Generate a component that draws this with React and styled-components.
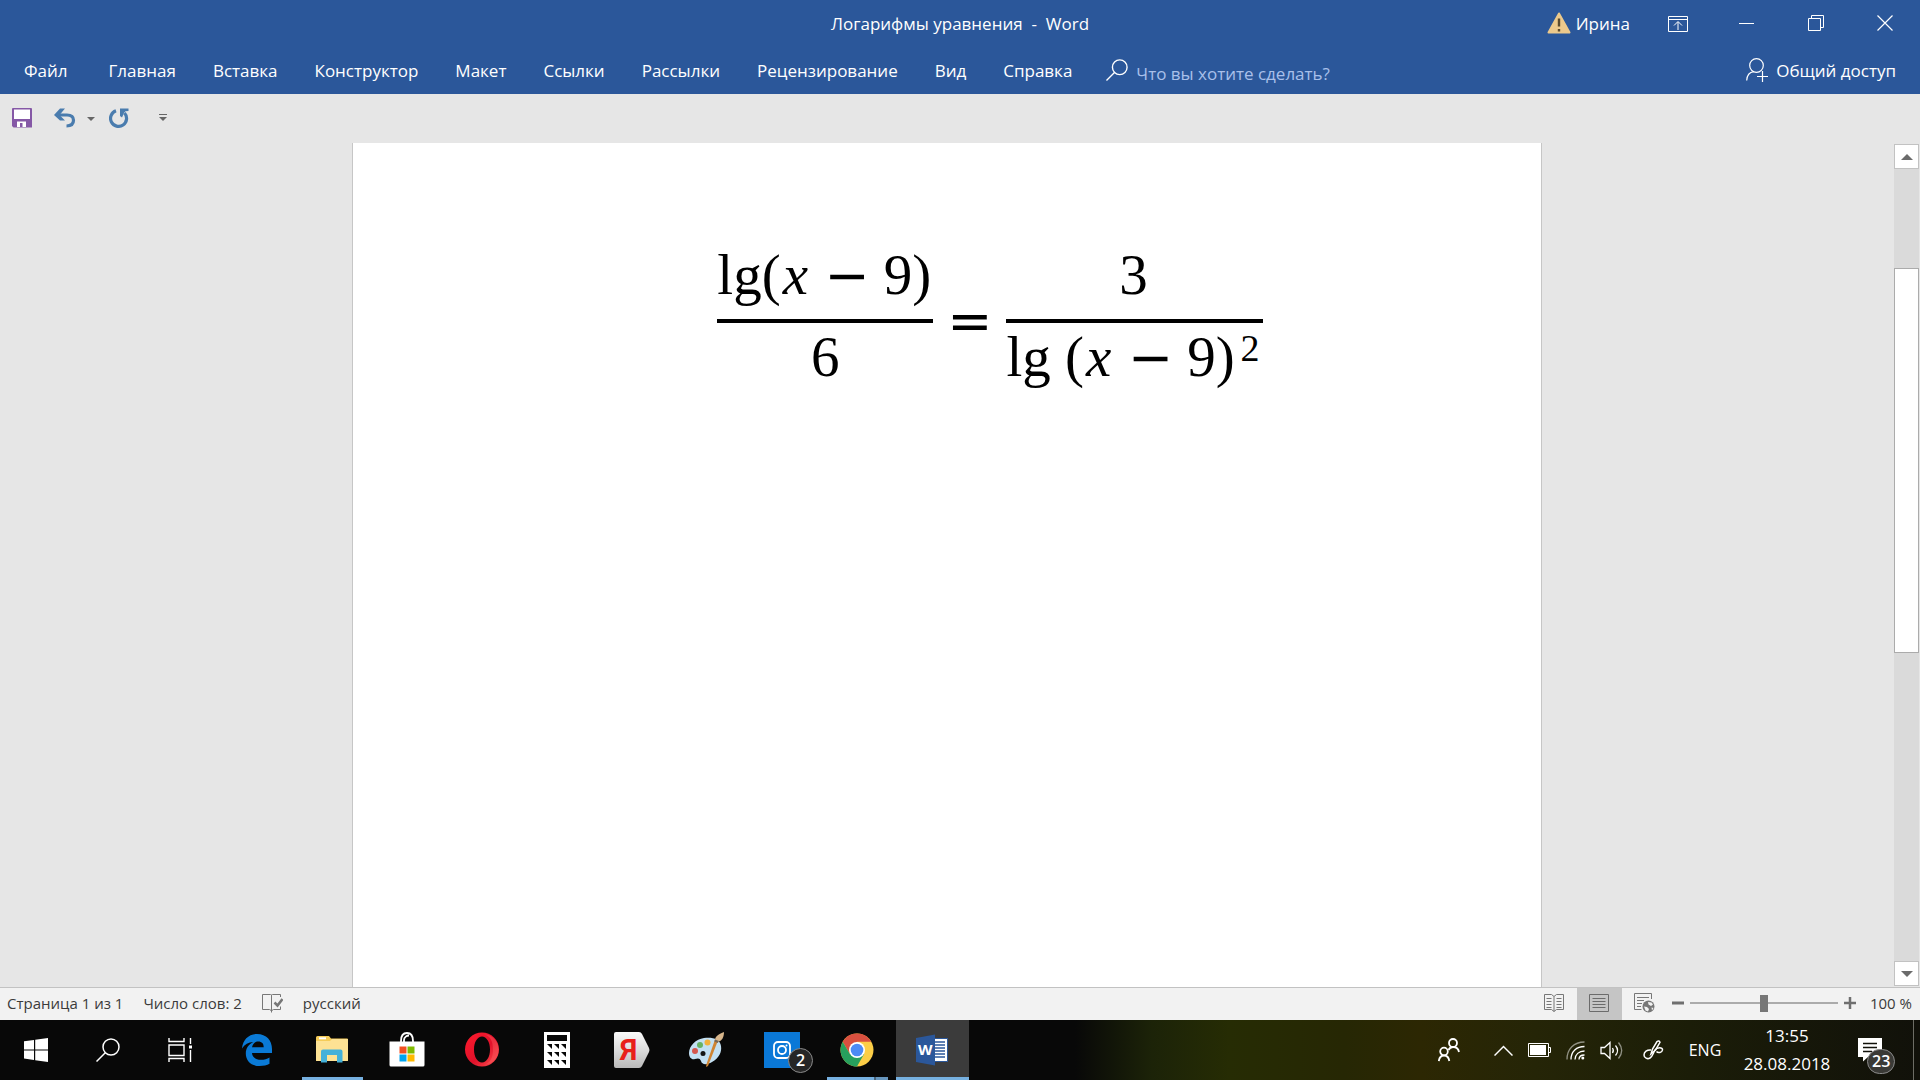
import React, { useState } from "react";
import styled, { createGlobalStyle, css } from "styled-components";

const GlobalStyle = createGlobalStyle`
  * {
    box-sizing: border-box;
  }

  body {
    margin: 0;
    font-family: "Open Sans", "Noto Sans", sans-serif;
    overflow: hidden;
  }

  button {
    border: 0;
    padding: 0;
    margin: 0;
    background: none;
    color: inherit;
    font: inherit;
  }

  svg {
    display: block;
    flex: none;
  }
`;

const Window = styled.div`
  height: 100vh;
  display: flex;
  flex-direction: column;
  background: #e6e6e6;
`;

/* ---------- title and ribbon ---------- */

const Header = styled.header`
  background: #2b579a;
  color: #fff;
  height: 94px;
  flex: none;
`;

const TitleBar = styled.div`
  height: 46px;
  display: grid;
  grid-template-columns: 1fr auto 1fr;
  align-items: center;
`;

const Title = styled.h1`
  grid-column: 2;
  margin: 0;
  font-size: 17px;
  font-weight: 400;
  white-space: pre;
`;

const WindowControls = styled.div`
  display: flex;
  align-items: center;
  justify-content: flex-end;
  height: 46px;
  padding-right: 1px;
`;

const Account = styled.button`
  display: flex;
  align-items: center;
  gap: 5px;
  font-size: 17px;
  margin-right: 13px;
`;

const ControlButton = styled.button`
  width: 69px;
  height: 46px;
  display: flex;
  align-items: center;
  justify-content: center;
`;

const Ribbon = styled.nav`
  height: 48px;
  display: flex;
  align-items: center;
  gap: 1px;
  padding: 0 24px 0 6px;
`;

const Tab = styled.button`
  height: 48px;
  padding: 0 18px;
  font-size: 17px;
  white-space: nowrap;
`;

const FileTab = styled(Tab)`
  margin-right: 4px;
`;

const TellMe = styled.label`
  display: flex;
  align-items: center;
  gap: 8px;
  margin-left: 15px;

  input {
    width: 240px;
    padding: 6px 0 0;
    border: 0;
    outline: 0;
    background: none;
    color: #fff;
    font: 17px "Open Sans", "Noto Sans", sans-serif;
  }

  input::placeholder {
    color: #a9c0ea;
    opacity: 1;
  }
`;

const Share = styled.button`
  margin-left: auto;
  display: flex;
  align-items: center;
  gap: 7px;
  font-size: 17px;
`;

const QuickAccess = styled.div`
  height: 49px;
  flex: none;
  display: flex;
  align-items: center;
  padding: 0 0 2px 12px;
`;

const QuickButton = styled.button`
  width: ${props => props.$width}px;
  height: 32px;
  margin-right: ${props => props.$after || 0}px;
  display: flex;
  align-items: center;
  justify-content: center;
`;

/* ---------- document ---------- */

const Workspace = styled.main`
  flex: 1;
  min-height: 0;
  display: flex;
`;

const Canvas = styled.div`
  flex: 1;
  display: flex;
  justify-content: center;
`;

const Page = styled.article`
  width: 62.8%;
  background: #fff;
  border: solid #c6c6c6;
  border-width: 0 1px;
  display: flex;
  justify-content: center;
  align-items: flex-start;
  padding: 98px 0 0 86px;
`;

const Equation = styled.div`
  display: flex;
  align-items: center;
  gap: 14px;
  color: #000;
  font-family: "Liberation Serif", serif;
  font-size: 57px;
  line-height: 68px;
  white-space: pre;

  i {
    font-style: italic;
    margin: 0 2px;
  }
`;

const Operator = styled.span`
  font-family: "DejaVu Sans", sans-serif;
  font-size: 54px;
  line-height: 0;
`;

const Fraction = styled.div`
  display: flex;
  flex-direction: column;
  text-align: center;
`;

const Numerator = styled.div`
  border-bottom: 4px solid #000;
  height: 82px;
  padding: 0 2px 0 0;
`;

const Denominator = styled.div`
  height: 78px;

  sup {
    margin: 0 3px 0 6px;
    font-size: 38px;
    line-height: 0;
    vertical-align: 15px;
  }
`;

const ScrollBar = styled.div`
  width: 25px;
  margin: 1px 1px 1px 0;
  display: flex;
  flex-direction: column;
  background: #dadada;
`;

const ScrollButton = styled.button`
  height: 25px;
  flex: none;
  background: #fff;
  border: 1px solid #c2c2c2;
  display: flex;
  align-items: center;
  justify-content: center;
`;

const ScrollTrack = styled.div`
  flex: 1;
  padding-top: 99px;
`;

const ScrollThumb = styled.div`
  height: 55.5%;
  background: #fff;
  border: 1px solid #ababab;
`;

/* ---------- status bar ---------- */

const StatusBar = styled.footer`
  height: 33px;
  flex: none;
  display: flex;
  align-items: center;
  padding: 0 8px 0 7px;
  background: #f2f2f2;
  border-top: 1px solid #c2c2c2;
  color: #3b3b3b;
  font-size: 15px;
`;

const StatusItem = styled.button`
  margin-right: 20px;
  padding-bottom: 2px;
  white-space: nowrap;
`;

const Views = styled.div`
  margin-left: auto;
  display: flex;
  height: 32px;
`;

const ViewButton = styled.button`
  width: 45px;
  padding-bottom: 2px;
  display: flex;
  align-items: center;
  justify-content: center;
  background: ${props => (props.$active ? "#c5c5c5" : "none")};
`;

const Zoom = styled.div`
  display: flex;
  align-items: center;
  gap: 6px;
  margin-left: 5px;
  padding-bottom: 2px;

  input {
    appearance: none;
    width: 148px;
    height: 18px;
    margin: 0;
    background: linear-gradient(#ababab, #ababab) center / 100% 2px no-repeat;
  }

  input::-webkit-slider-thumb {
    appearance: none;
    width: 8px;
    height: 17px;
    background: #777;
  }
`;

const ZoomValue = styled.button`
  margin-left: 8px;
  white-space: nowrap;
`;

/* ---------- taskbar ---------- */

const Taskbar = styled.div`
  height: 60px;
  flex: none;
  display: flex;
  color: #fff;
  background: linear-gradient(
    90deg,
    #080808 0 56%,
    #1c2308 60%,
    #262c04 64%,
    #262704 70%,
    #2c2703 74%,
    #252507 80%,
    #1b1d08 88%,
    #11110a 100%
  );
`;

const SystemButton = styled.button`
  width: 72px;
  height: 60px;
  display: flex;
  align-items: center;
  justify-content: center;
`;

const Apps = styled.div`
  display: flex;
  gap: 2px;
  margin-left: 5px;
`;

const AppButton = styled.button`
  position: relative;
  width: 73px;
  height: 60px;
  padding-right: 2px;
  display: flex;
  align-items: center;
  justify-content: center;

  ${props => props.$running && css`
    &::after {
      content: "";
      position: absolute;
      bottom: 0;
      left: ${props.$active ? 0 : 6}px;
      right: ${props.$active ? 0 : 6}px;
      height: 3px;
      background: ${props.$stacked ? "linear-gradient(90deg, #76b0e0 0 47px, #4a657c 47px 49px, #6796bd 49px)" : "#76b0e0"};
    }
  `}

  ${props => props.$active && css`
    background: #3b3b3b;
  `}
`;

const Badge = styled.span`
  position: absolute;
  left: ${props => props.$left}px;
  top: ${props => props.$top}px;
  min-width: 25px;
  height: 25px;
  padding: 0 4px;
  border: 1px solid #8a8a8a;
  border-radius: 13px;
  background: ${props => props.$fill};
  font-size: 16px;
  font-weight: 600;
  line-height: 23px;
  text-align: center;
`;

const Tray = styled.div`
  margin-left: auto;
  display: flex;
  align-items: center;
`;

const TrayButton = styled.button`
  position: relative;
  width: ${props => props.$width}px;
  height: 60px;
  display: flex;
  align-items: center;
  justify-content: center;
  font-size: 16px;
  white-space: nowrap;
`;

const NotificationsButton = styled(TrayButton)`
  padding-right: 14px;
`;

const Clock = styled.button`
  width: 108px;
  font-size: 17px;
  line-height: 28px;
  text-align: center;
`;

const ShowDesktop = styled.button`
  width: 7px;
  height: 60px;
  border-left: 1px solid #6d6d65;
`;

/* ---------- icons ---------- */

const SearchIcon = ({ size = 24, stroke = 1.5 }) => (
  <svg width={size} height={size} viewBox="0 0 24 24" fill="none" stroke="#fff" strokeWidth={stroke}>
    <circle cx="15" cy="9" r="8" />
    <path d="M9.5 14.5 0.5 23.5" />
  </svg>
);

const WarningIcon = () => (
  <svg width="24" height="22" viewBox="0 0 24 22">
    <path d="M12 1.5 22.5 20.5H1.5Z" fill="#ecc98c" stroke="#ecc98c" strokeWidth="2" strokeLinejoin="round" />
    <path d="M12 6.5v8M12 17v2.4" stroke="#5b4b2e" strokeWidth="2.4" />
  </svg>
);

const RibbonOptionsIcon = () => (
  <svg width="20" height="17" viewBox="0 0 20 17" fill="none" stroke="#fff">
    <path d="M.5 1.5h19v15H.5zM.5 4.5h19M10 15V7M6 10.5 10 6.5l4 4" />
  </svg>
);

const MinimizeIcon = () => (
  <svg width="15" height="16" viewBox="0 0 15 16" stroke="#fff">
    <path d="M0 8.5h15" />
  </svg>
);

const RestoreIcon = () => (
  <svg width="16" height="16" viewBox="0 0 16 16" fill="none" stroke="#fff">
    <path d="M.5 3.5h12v12H.5zM3.5 3.5v-3h12v12h-3" />
  </svg>
);

const CloseIcon = () => (
  <svg width="16" height="16" viewBox="0 0 16 16" stroke="#fff" strokeWidth="1.2">
    <path d="M.5.5l15 15M15.5.5l-15 15" />
  </svg>
);

const ShareIcon = () => (
  <svg width="23" height="24" viewBox="0 0 23 24" fill="none" stroke="#fff" strokeWidth="1.2">
    <circle cx="10.5" cy="7.5" r="6.8" />
    <path d="M.7 22.5c.3-5 3-8.3 7-8.8M11 18.500h11M16.5 13v11" />
  </svg>
);

const SaveIcon = () => (
  <svg width="20" height="20" viewBox="0 0 20 20">
    <path d="M1 0h18a1 1 0 0 1 1 1v18.500H1.500L0 18V1a1 1 0 0 1 1-1z" fill="#8558a6" />
    <path d="M2 1.500h16V11H2z" fill="#fff" />
    <path d="M5 13.500h9V19H5z" fill="#fff" />
    <path d="M8 15h2.500v4H8z" fill="#8558a6" />
  </svg>
);

const UndoIcon = () => (
  <svg width="22" height="20" viewBox="0 0 22 20">
    <path d="M4 7h9c4.500 0 6.500 2.300 6.500 5.300S17.500 18 12.500 18" fill="none" stroke="#4a7cae" strokeWidth="3.2" />
    <path d="M6 .5h5L5.500 7l5.500 5.500H6L0 7z" fill="#4a7cae" />
  </svg>
);

const RedoIcon = () => (
  <svg width="20" height="20" viewBox="0 0 20 20">
    <path d="M7 2.800A8 8 0 1 0 15.500 5" fill="none" stroke="#4a7cae" strokeWidth="3.2" />
    <path d="M11 .5h8.500V3l-3 .3-1.500 1.700-2 4.500L11 8z" fill="#4a7cae" />
  </svg>
);

const CaretIcon = ({ bar }) => (
  <svg width="8" height="9" viewBox="0 0 8 9" fill="#666">
    {bar && <path d="M0 1h8v1H0z" />}
    <path d="M0 4h8L4 8z" />
  </svg>
);

const TriangleIcon = ({ down }) => (
  <svg width="12" height="6" viewBox="0 0 12 6" fill="#6b6b6b">
    <path d={down ? "M0 0h12L6 6z" : "M0 6h12L6 0z"} />
  </svg>
);

const ProofIcon = () => (
  <svg width="21" height="19" viewBox="0 0 21 19" fill="none" stroke="#777">
    <path d="M9.500 3V1.500q0-1-1-1h-8v15h7q1.500 0 2 2 .5-2 2-2h7v-3M9.500 3V1.500q0-1 1-1h8v2.500M9.500 3v15.500" />
    <path d="m12.500 8.500 3 3 5-6.500" strokeWidth="2.5" />
  </svg>
);

const ReadIcon = () => (
  <svg width="20" height="18" viewBox="0 0 20 18" fill="none" stroke="#777">
    <path d="M.5.500h7l2.500 2 2.500-2h7v15h-7l-2.500 2-2.500-2h-7zM10 2.500v15" />
    <path d="M2.500 4.500h5M2.500 7.500h5M2.500 10.500h5M2.500 13.500h5M12.500 4.500h5M12.500 7.500h5M12.500 10.500h5M12.500 13.500h5" />
  </svg>
);

const PrintIcon = () => (
  <svg width="20" height="18" viewBox="0 0 20 18" fill="none" stroke="#6b6b6b">
    <path d="M.5.500h19v17H.5zM3.500 4.500h13M3.500 7.500h13M3.500 10.500h13M3.500 13.500h13" />
  </svg>
);

const WebIcon = () => (
  <svg width="21" height="20" viewBox="0 0 21 20" fill="none" stroke="#777">
    <path d="M7.500 16.500h-7V.5h17v5.500M3 4.500h12M3 7.500h7M3 10.500h5M3 13.500h4" />
    <circle cx="14.5" cy="13.5" r="6" fill="#777" stroke="none" />
    <path d="M14 9l3.500.5 1.500 2-2 1.500-2.500-1.500zM10 13.500l3 .5 2 2-1 2.500-2.500-1zM17.500 14.500l2 .5-1.500 2.500z" fill="#f2f2f2" stroke="none" />
  </svg>
);

const MinusIcon = () => (
  <svg width="12" height="12" viewBox="0 0 12 12" stroke="#6f6f6f" strokeWidth="3">
    <path d="M0 6h12" />
  </svg>
);

const PlusIcon = () => (
  <svg width="12" height="12" viewBox="0 0 12 12" stroke="#6f6f6f" strokeWidth="2.5">
    <path d="M0 6h12M6 0v12" />
  </svg>
);

const WindowsIcon = () => (
  <svg width="24" height="24" viewBox="0 0 24 24" fill="#fff">
    <path d="M0 3.300 10 2v9.400H0zM11.200 1.800 24 0v11.400H11.200zM0 12.600h10V22L0 20.600zM11.200 12.600H24V24l-12.800-1.800z" />
  </svg>
);

const TaskViewIcon = () => (
  <svg width="25" height="24" viewBox="0 0 25 24" fill="none" stroke="#fff" strokeWidth="1.4">
    <path d="M1 0v3.500h15V0M1 7h15v10.500H1zM1 24v-3.500h15V24M22.500 0v6M22.500 12v12" />
    <path d="M21 7.500h3v3h-3z" fill="#fff" stroke="none" />
  </svg>
);

const EdgeIcon = () => (
  <svg width="30" height="32" viewBox="0 0 30 32">
    <path
      d="M0 14.500C.8 6 6.500 0 15 0c9.500 0 15 6.500 15 15v4H10c.3 4.500 4 6.800 9 6.800 3.300 0 6-.8 8.500-2.300v6.300C25 31.300 21.500 32 17.500 32 9 32 3.800 26.800 3.800 19.500c0-5.500 3-9.300 7.500-11.500C6.500 8.300 2.500 10.500 0 14.500zM10 13.200h11.700c0-3.500-1.700-5.700-5.500-5.700-3.300 0-5.400 2.200-6.200 5.700z"
      fill="#0a7ad6"
    />
  </svg>
);

const ExplorerIcon = () => (
  <svg width="32" height="28" viewBox="0 0 32 28">
    <path d="M0 1.500A1.500 1.500 0 0 1 1.500 0H13l2 2.500h16a1 1 0 0 1 1 1V25H0z" fill="#f5cc58" />
    <path d="M3 1.300h7v2H3z" fill="#fff" />
    <path d="M0 5h14l2-2h16v21a1 1 0 0 1-1 1H1a1 1 0 0 1-1-1z" fill="#fde294" />
    <path d="M5 15.500A2 2 0 0 1 7 13.500h17.500a2 2 0 0 1 2 2V26.500h-5.500v-7.500H11v7.500H5z" fill="#44b1d9" />
  </svg>
);

const StoreIcon = () => (
  <svg width="36" height="36" viewBox="0 0 36 36">
    <path d="M12 11V9c0-5 2-8 6-8s6 3 6 8v2M15 10V8c0-3 3-4.500 5-4.500" fill="none" stroke="#fff" strokeWidth="1.8" />
    <path d="M.5 9.500h35V33a1.500 1.500 0 0 1-1.500 1.500H2A1.500 1.500 0 0 1 .5 33z" fill="#fff" />
    <path d="M10.500 14.500h7v7h-7z" fill="#f25022" />
    <path d="M18.500 14.500h7v7h-7z" fill="#7fba00" />
    <path d="M10.500 22.500h7v7h-7z" fill="#00a4ef" />
    <path d="M18.500 22.500h7v7h-7z" fill="#ffb900" />
  </svg>
);

const OperaIcon = () => (
  <svg width="36" height="36" viewBox="0 0 36 36">
    <defs>
      <linearGradient id="opera" x1="0" y1="0" x2="1" y2="1">
        <stop offset="0" stopColor="#ff1b2d" />
        <stop offset=".55" stopColor="#e0112a" />
        <stop offset="1" stopColor="#ff5252" />
      </linearGradient>
    </defs>
    <path fillRule="evenodd" fill="url(#opera)" d="M18 .5a17 17 0 1 0 0 34 17 17 0 1 0 0-34zM18 4.500c4.500 0 8 5.500 8 13s-3.500 13-8 13-8-5.500-8-13 3.500-13 8-13z" />
    <path d="M19 2.500c7 0 10 7 10 15s-3 15-10 15c9 1 15.500-6.500 15.500-15S28 1.500 19 2.500z" fill="#ff6a6a" opacity=".35" />
  </svg>
);

const CalcIcon = () => (
  <svg width="26" height="36" viewBox="0 0 26 36">
    <path d="M0 0h26v36H0z" fill="#fff" />
    <path d="M3 3h20v6H3z" fill="#080808" />
    {[12, 20, 28].map(y =>
      [3, 10, 17].map(x => <path key={`${x}-${y}`} d={`M${x} ${y}h5v5z`} fill="#080808" />)
    )}
  </svg>
);

const YandexIcon = () => (
  <svg width="36" height="36" viewBox="0 0 36 36">
    <defs>
      <linearGradient id="yandex" x1="0" y1="0" x2="0" y2="1">
        <stop offset="0" stopColor="#fafafa" />
        <stop offset=".5" stopColor="#dcdcdc" />
        <stop offset="1" stopColor="#b9b9b9" />
      </linearGradient>
    </defs>
    <path d="M2 0h23q2 0 3 2l7 14q1 2 0 4l-7 14q-1 2-3 2H2q-2 0-2-2V2q0-2 2-2z" fill="url(#yandex)" />
    <text x="6" y="28" fill="#e8201a" fontFamily="Roboto" fontWeight="700" fontSize="29">Я</text>
  </svg>
);

const PaintIcon = () => (
  <svg width="36" height="36" viewBox="0 0 36 36">
    <path d="M15 6C7 7 0 14 0 21c0 5 3 7 6 6 3-1 5-1 6 2 1 4 6 4 11 1 7-4 10-10 9-16C31 7 24 5 15 6z" fill="#c3e0f3" />
    <circle cx="14" cy="21.5" r="2.5" fill="#151515" />
    <circle cx="6" cy="19" r="3" fill="#d4574e" />
    <circle cx="11" cy="13" r="3" fill="#67b365" />
    <circle cx="18.5" cy="10.5" r="3" fill="#f2b13d" />
    <path d="M29 8.500 19 34l-2 1 .5-3L26 7.500z" fill="#cf8433" />
    <path d="M26 8c0-3 2-5 9-8 0 5-2 9-5.500 9.500z" fill="#d7b58b" />
    <path d="M26 7.500l3.800 1.500-1 2-3.500-1.500z" fill="#776655" />
  </svg>
);

const InstagramIcon = () => (
  <svg width="36" height="36" viewBox="0 0 36 36" fill="none" stroke="#fff" strokeWidth="1.8">
    <path d="M0 0h36v36H0z" fill="#0a78d7" stroke="none" />
    <rect x="10" y="10" width="16" height="16" rx="4" />
    <circle cx="18" cy="18" r="4" />
    <circle cx="22.5" cy="13.5" r="1" fill="#fff" stroke="none" />
  </svg>
);

const ChromeIcon = () => (
  <svg width="34" height="34" viewBox="0 0 34 34">
    <circle cx="17" cy="17" r="16.5" fill="#fcce47" />
    <path d="M2.700 8.800A16.500 16.500 0 0 1 31.300 8.800H17L9.900 21.100z" fill="#d9503f" />
    <path d="M2.700 8.800A16.500 16.500 0 0 0 17 33.500l7.100-12.400H9.900z" fill="#27a05d" />
    <circle cx="17" cy="17" r="8" fill="#fff" />
    <circle cx="17" cy="17" r="6.3" fill="#4c8bf5" />
  </svg>
);

const WordIcon = () => (
  <svg width="32" height="32" viewBox="0 0 32 32">
    <path d="M17 4.500h14.500v23H17z" fill="#fff" stroke="#2b579a" />
    <path d="M18 8h11M18 11h11M18 14h11M18 17h11M18 20h11M18 23h11" stroke="#2b579a" strokeWidth="1.5" />
    <path d="M0 4 19 .5v31L0 28z" fill="#2b579a" />
    <text x="2" y="21" fill="#fff" fontFamily="Open Sans" fontWeight="700" fontSize="15">W</text>
  </svg>
);

const PeopleIcon = () => (
  <svg width="22" height="24" viewBox="0 0 22 24" fill="none" stroke="#fff" strokeWidth="1.8">
    <circle cx="15" cy="5" r="4" />
    <circle cx="6" cy="13.5" r="3.8" />
    <path d="M10.500 12c1-2 2.500-3 4.500-3 3.500 0 5.500 2 6 5M.8 23c.5-3.500 2.500-5.500 5.200-5.500s4.800 2 5.300 5.500" />
  </svg>
);

const ChevronIcon = () => (
  <svg width="19" height="11" viewBox="0 0 19 11" fill="none" stroke="#fff" strokeWidth="1.5">
    <path d="M.5 10.500l9-9 9 9" />
  </svg>
);

const BatteryIcon = () => (
  <svg width="23" height="14" viewBox="0 0 23 14">
    <path d="M.5.500h20v13H.5zM20.500 4.500h2v5h-2z" fill="none" stroke="#fff" />
    <path d="M2 2h16v10H2z" fill="#fff" />
  </svg>
);

const WifiIcon = () => (
  <svg width="19" height="19" viewBox="0 0 19 19" fill="none" stroke="#fff" strokeWidth="1.3">
    <path d="M1 18.500C1 8 8 1 18.500 1" opacity=".5" />
    <path d="M5 18.500C5 10.500 10.500 5.500 18.500 5.500M9 18.500c0-5 4-8.500 9.500-8.500M13 18.500c0-2.500 2-4.500 5.500-4.500" />
    <circle cx="16.8" cy="17" r="1.5" fill="#fff" stroke="none" />
  </svg>
);

const VolumeIcon = () => (
  <svg width="23" height="19" viewBox="0 0 23 19" fill="none" stroke="#fff" strokeWidth="1.3">
    <path d="M1 6.500h3.500L10 1.500v16l-5.500-5H1z" />
    <path d="M12.500 7c1 1.500 1 3.500 0 5M15.500 4.500c2.500 3 2.500 7 0 10" />
    <path d="M18.500 1.500c4 5 4 11 0 16" opacity=".5" />
  </svg>
);

const PenIcon = () => (
  <svg width="21" height="20" viewBox="0 0 21 20" fill="none" stroke="#fff" strokeWidth="1.5">
    <path d="M8 14 9.500 9 14 1.500q2-1.500 3 .8L12.500 10 8 14z" />
    <path d="M8 10c-4-.5-7 2-7 5s3.500 4.500 6 3 3-4.500 5-8c2-3 8-3 7.500 0-.4 2.500-4.500 3.500-6 1.500" />
  </svg>
);

const MessageIcon = () => (
  <svg width="24" height="24" viewBox="0 0 24 24">
    <path d="M0 0h24v19H10l-5 4.500V19H0z" fill="#fff" />
    <path d="M5 5.500h14M5 9.500h14M5 13.500h9" stroke="#11110a" strokeWidth="1.3" />
  </svg>
);

const TABS = ["Главная", "Вставка", "Конструктор", "Макет", "Ссылки", "Рассылки", "Рецензирование", "Вид", "Справка"];

const APPS = [
  { name: "Microsoft Edge", icon: EdgeIcon },
  { name: "Проводник", icon: ExplorerIcon, running: true },
  { name: "Microsoft Store", icon: StoreIcon },
  { name: "Opera", icon: OperaIcon },
  { name: "Калькулятор", icon: CalcIcon },
  { name: "Яндекс", icon: YandexIcon },
  { name: "Paint", icon: PaintIcon },
  { name: "Instagram", icon: InstagramIcon, badge: 2 },
  { name: "Google Chrome", icon: ChromeIcon, running: true, stacked: true },
  { name: "Word", icon: WordIcon, running: true, active: true }
];

const App = () => {
  const [zoom, setZoom] = useState(100);

  return (
    <Window>
      <GlobalStyle />
      <Header>
        <TitleBar>
          <Title>{"Логарифмы уравнения  -  Word"}</Title>
          <WindowControls>
            <Account><WarningIcon />Ирина</Account>
            <ControlButton aria-label="Параметры ленты"><RibbonOptionsIcon /></ControlButton>
            <ControlButton aria-label="Свернуть"><MinimizeIcon /></ControlButton>
            <ControlButton aria-label="Восстановить"><RestoreIcon /></ControlButton>
            <ControlButton aria-label="Закрыть"><CloseIcon /></ControlButton>
          </WindowControls>
        </TitleBar>
        <Ribbon>
          <FileTab>Файл</FileTab>
          {TABS.map(tab => <Tab key={tab}>{tab}</Tab>)}
          <TellMe>
            <SearchIcon size={22} />
            <input aria-label="Помощник" placeholder="Что вы хотите сделать?" />
          </TellMe>
          <Share><ShareIcon />Общий доступ</Share>
        </Ribbon>
      </Header>

      <QuickAccess>
        <QuickButton $width={20} $after={22} aria-label="Сохранить"><SaveIcon /></QuickButton>
        <QuickButton $width={22} $after={8} aria-label="Отменить"><UndoIcon /></QuickButton>
        <QuickButton $width={14} $after={11} aria-label="Список отмены"><CaretIcon /></QuickButton>
        <QuickButton $width={20} $after={27} aria-label="Повторить"><RedoIcon /></QuickButton>
        <QuickButton $width={14} aria-label="Настройка панели"><CaretIcon bar /></QuickButton>
      </QuickAccess>

      <Workspace>
        <Canvas>
          <Page>
            <Equation>
              <Fraction>
                <Numerator>lg(<i>x</i> <Operator>−</Operator> 9)</Numerator>
                <Denominator>6</Denominator>
              </Fraction>
              <Operator>=</Operator>
              <Fraction>
                <Numerator>3</Numerator>
                <Denominator>lg (<i>x</i> <Operator>−</Operator> 9)<sup>2</sup></Denominator>
              </Fraction>
            </Equation>
          </Page>
        </Canvas>
        <ScrollBar>
          <ScrollButton aria-label="Вверх"><TriangleIcon /></ScrollButton>
          <ScrollTrack><ScrollThumb /></ScrollTrack>
          <ScrollButton aria-label="Вниз"><TriangleIcon down /></ScrollButton>
        </ScrollBar>
      </Workspace>

      <StatusBar>
        <StatusItem>Страница 1 из 1</StatusItem>
        <StatusItem>Число слов: 2</StatusItem>
        <StatusItem aria-label="Правописание"><ProofIcon /></StatusItem>
        <StatusItem>русский</StatusItem>
        <Views>
          <ViewButton aria-label="Режим чтения"><ReadIcon /></ViewButton>
          <ViewButton $active aria-label="Разметка страницы"><PrintIcon /></ViewButton>
          <ViewButton aria-label="Веб-документ"><WebIcon /></ViewButton>
        </Views>
        <Zoom>
          <button aria-label="Уменьшить" onClick={() => setZoom(zoom - 10)}><MinusIcon /></button>
          <input
            type="range"
            aria-label="Масштаб"
            min="0"
            max="200"
            value={zoom}
            onChange={e => setZoom(Number(e.target.value))}
          />
          <button aria-label="Увеличить" onClick={() => setZoom(zoom + 10)}><PlusIcon /></button>
          <ZoomValue>{zoom} %</ZoomValue>
        </Zoom>
      </StatusBar>

      <Taskbar>
        <SystemButton aria-label="Пуск"><WindowsIcon /></SystemButton>
        <SystemButton aria-label="Поиск"><SearchIcon /></SystemButton>
        <SystemButton aria-label="Представление задач"><TaskViewIcon /></SystemButton>
        <Apps>
          {APPS.map(({ name, icon: Icon, running, stacked, active, badge }) => (
            <AppButton key={name} aria-label={name} $running={running} $stacked={stacked} $active={active}>
              <Icon />
              {badge && <Badge $left={42} $top={28} $fill="#262626">{badge}</Badge>}
            </AppButton>
          ))}
        </Apps>
        <Tray>
          <TrayButton $width={72} aria-label="Люди"><PeopleIcon /></TrayButton>
          <TrayButton $width={36} aria-label="Скрытые значки"><ChevronIcon /></TrayButton>
          <TrayButton $width={36} aria-label="Батарея"><BatteryIcon /></TrayButton>
          <TrayButton $width={36} aria-label="Сеть"><WifiIcon /></TrayButton>
          <TrayButton $width={36} aria-label="Громкость"><VolumeIcon /></TrayButton>
          <TrayButton $width={48} aria-label="Перо"><PenIcon /></TrayButton>
          <TrayButton $width={56}>ENG</TrayButton>
          <Clock>13:55<br />28.08.2018</Clock>
          <NotificationsButton $width={72} aria-label="Уведомления">
            <MessageIcon />
            <Badge $left={26} $top={29} $fill="#3a3a36">23</Badge>
          </NotificationsButton>
          <ShowDesktop aria-label="Показать рабочий стол" />
        </Tray>
      </Taskbar>
    </Window>
  );
};

export default App;
